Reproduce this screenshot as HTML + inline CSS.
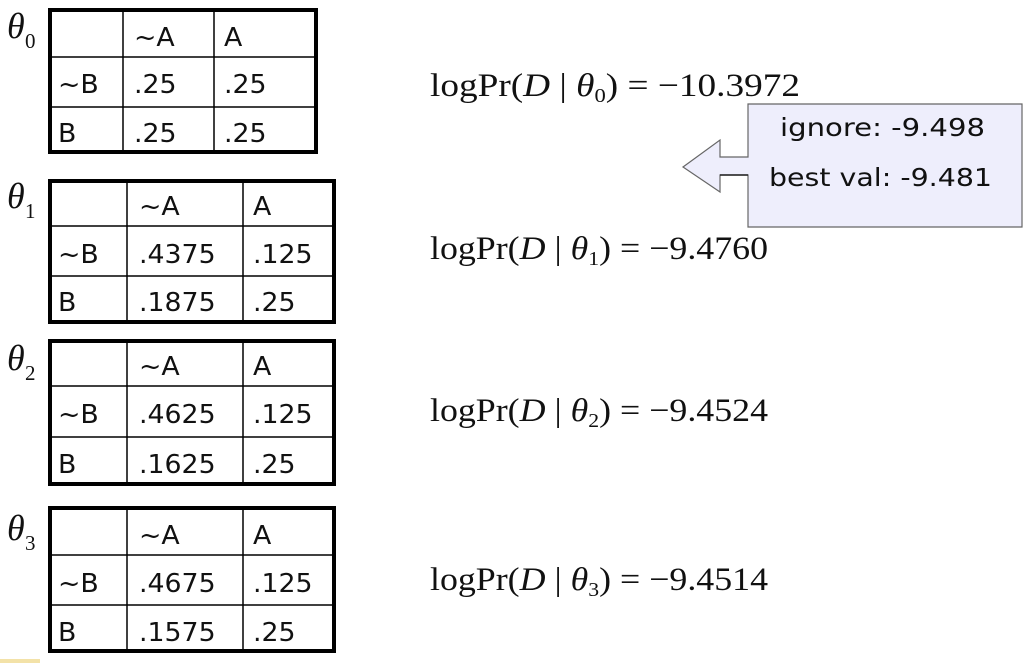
<!DOCTYPE html>
<html><head><meta charset="utf-8"><style>
html,body{margin:0;padding:0;background:#fff;width:1030px;height:663px;overflow:hidden}
svg{display:block}
</style></head><body>
<svg width="1030" height="663" viewBox="0 0 1030 663">
<g stroke="#000" fill="none">
 <rect x="50" y="10" width="266" height="142" stroke-width="4"/>
 <line x1="123" y1="10" x2="123" y2="152" stroke-width="1.5"/>
 <line x1="214" y1="10" x2="214" y2="152" stroke-width="1.5"/>
 <line x1="50" y1="57" x2="316" y2="57" stroke-width="1.5"/>
 <line x1="50" y1="107" x2="316" y2="107" stroke-width="1.5"/>
 <rect x="50" y="181" width="284" height="141" stroke-width="4"/>
 <line x1="127" y1="181" x2="127" y2="322" stroke-width="1.5"/>
 <line x1="243" y1="181" x2="243" y2="322" stroke-width="1.5"/>
 <line x1="50" y1="226" x2="334" y2="226" stroke-width="1.5"/>
 <line x1="50" y1="276" x2="334" y2="276" stroke-width="1.5"/>
 <rect x="50" y="341" width="284" height="143" stroke-width="4"/>
 <line x1="127" y1="341" x2="127" y2="484" stroke-width="1.5"/>
 <line x1="243" y1="341" x2="243" y2="484" stroke-width="1.5"/>
 <line x1="50" y1="386" x2="334" y2="386" stroke-width="1.5"/>
 <line x1="50" y1="437" x2="334" y2="437" stroke-width="1.5"/>
 <rect x="50" y="508" width="284" height="143" stroke-width="4"/>
 <line x1="127" y1="508" x2="127" y2="651" stroke-width="1.5"/>
 <line x1="243" y1="508" x2="243" y2="651" stroke-width="1.5"/>
 <line x1="50" y1="555" x2="334" y2="555" stroke-width="1.5"/>
 <line x1="50" y1="605" x2="334" y2="605" stroke-width="1.5"/>
</g>
<g font-family="DejaVu Sans, Liberation Sans, sans-serif" font-size="26" fill="#111">
 <text transform="translate(134,46) scale(1.03,1)">~A</text><text transform="translate(224,46) scale(1.03,1)">A</text>
 <text transform="translate(58,93) scale(1.03,1)">~B</text><text transform="translate(134,93) scale(1.03,1)">.25</text><text transform="translate(224,93) scale(1.03,1)">.25</text>
 <text transform="translate(58,142) scale(1.03,1)">B</text><text transform="translate(134,142) scale(1.03,1)">.25</text><text transform="translate(224,142) scale(1.03,1)">.25</text>

 <text transform="translate(139,215) scale(1.03,1)">~A</text><text transform="translate(253,215) scale(1.03,1)">A</text>
 <text transform="translate(58,263) scale(1.03,1)">~B</text><text transform="translate(139,263) scale(1.03,1)">.4375</text><text transform="translate(253,263) scale(1.03,1)">.125</text>
 <text transform="translate(58,311) scale(1.03,1)">B</text><text transform="translate(139,311) scale(1.03,1)">.1875</text><text transform="translate(253,311) scale(1.03,1)">.25</text>

 <text transform="translate(139,375) scale(1.03,1)">~A</text><text transform="translate(253,375) scale(1.03,1)">A</text>
 <text transform="translate(58,423) scale(1.03,1)">~B</text><text transform="translate(139,423) scale(1.03,1)">.4625</text><text transform="translate(253,423) scale(1.03,1)">.125</text>
 <text transform="translate(58,473) scale(1.03,1)">B</text><text transform="translate(139,473) scale(1.03,1)">.1625</text><text transform="translate(253,473) scale(1.03,1)">.25</text>

 <text transform="translate(139,544) scale(1.03,1)">~A</text><text transform="translate(253,544) scale(1.03,1)">A</text>
 <text transform="translate(58,592) scale(1.03,1)">~B</text><text transform="translate(139,592) scale(1.03,1)">.4675</text><text transform="translate(253,592) scale(1.03,1)">.125</text>
 <text transform="translate(58,641) scale(1.03,1)">B</text><text transform="translate(139,641) scale(1.03,1)">.1575</text><text transform="translate(253,641) scale(1.03,1)">.25</text>
</g>
<g font-family="Liberation Serif, serif" fill="#111">
 <text x="7" y="38" font-size="36" font-style="italic">θ</text><text x="25" y="48" font-size="21">0</text>
 <text x="7" y="208" font-size="36" font-style="italic">θ</text><text x="25" y="218" font-size="21">1</text>
 <text x="7" y="370" font-size="36" font-style="italic">θ</text><text x="25" y="380" font-size="21">2</text>
 <text x="7" y="540" font-size="36" font-style="italic">θ</text><text x="25" y="550" font-size="21">3</text>
</g>
<g font-family="Liberation Serif, serif" font-size="33" fill="#111">
 <text x="430" y="96" textLength="370" lengthAdjust="spacingAndGlyphs">logPr(<tspan font-style="italic">D</tspan> | <tspan font-style="italic">θ</tspan><tspan font-size="20" dy="6">0</tspan><tspan dy="-6">) = −10.3972</tspan></text>
 <text x="430" y="259" textLength="338" lengthAdjust="spacingAndGlyphs">logPr(<tspan font-style="italic">D</tspan> | <tspan font-style="italic">θ</tspan><tspan font-size="20" dy="6">1</tspan><tspan dy="-6">) = −9.4760</tspan></text>
 <text x="430" y="421" textLength="338" lengthAdjust="spacingAndGlyphs">logPr(<tspan font-style="italic">D</tspan> | <tspan font-style="italic">θ</tspan><tspan font-size="20" dy="6">2</tspan><tspan dy="-6">) = −9.4524</tspan></text>
 <text x="430" y="590" textLength="338" lengthAdjust="spacingAndGlyphs">logPr(<tspan font-style="italic">D</tspan> | <tspan font-style="italic">θ</tspan><tspan font-size="20" dy="6">3</tspan><tspan dy="-6">) = −9.4514</tspan></text>
</g>
<path d="M748,104 L1022,104 L1022,227 L748,227 L748,175 L720,175 L720,192 L683,167 L720,140 L720,157 L748,157 Z" fill="#eeeefc" stroke="#666" stroke-width="1.2"/>
<line x1="720" y1="175" x2="748" y2="175" stroke="#222" stroke-width="1.5"/>
<g font-family="DejaVu Sans, Liberation Sans, sans-serif" font-size="25" fill="#111">
 <text x="780" y="136" textLength="205" lengthAdjust="spacingAndGlyphs">ignore: -9.498</text>
 <text x="769" y="186" textLength="223" lengthAdjust="spacingAndGlyphs">best val: -9.481</text>
</g>
<rect x="0" y="659" width="40" height="4" fill="#f3e2a8"/>
</svg>
</body></html>
